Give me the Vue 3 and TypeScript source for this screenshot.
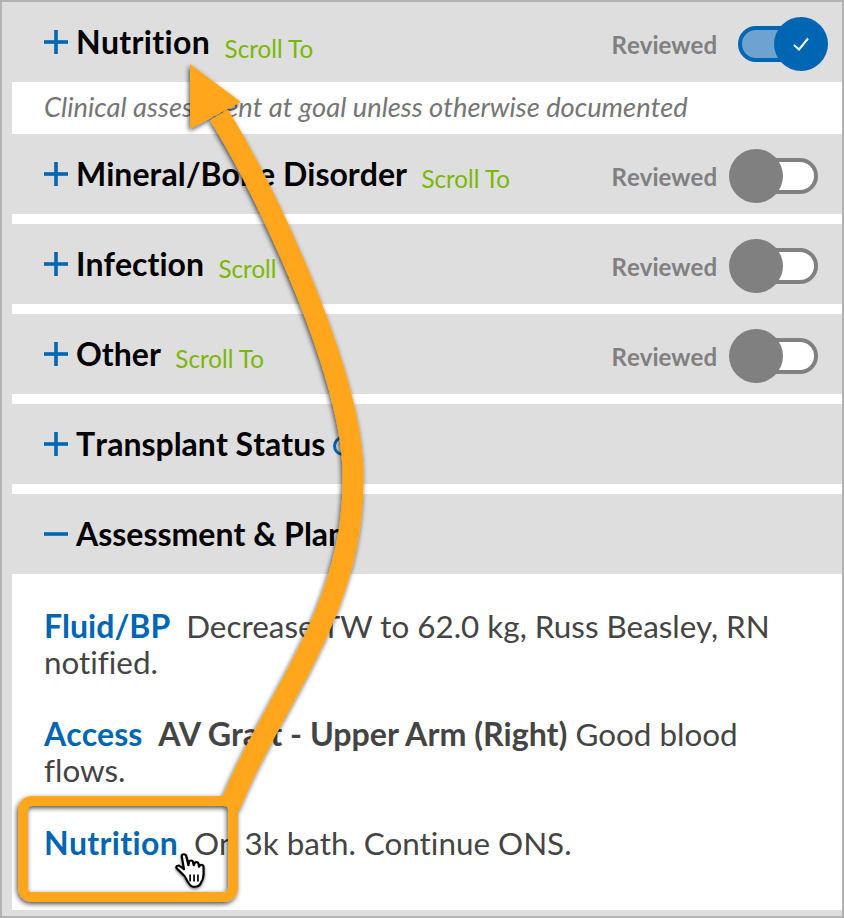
<script setup lang="ts">
interface Row { title: string; scroll?: boolean; reviewed?: 'on' | 'off'; sign: 'plus' | 'minus'; info?: boolean; note?: string }
const rows: Row[] = [
  { title: 'Nutrition', scroll: true, reviewed: 'on', sign: 'plus', note: 'Clinical assessment at goal unless otherwise documented' },
  { title: 'Mineral/Bone Disorder', scroll: true, reviewed: 'off', sign: 'plus' },
  { title: 'Infection', scroll: true, reviewed: 'off', sign: 'plus' },
  { title: 'Other', scroll: true, reviewed: 'off', sign: 'plus' },
  { title: 'Transplant Status', info: true, sign: 'plus' },
  { title: 'Assessment & Plan', sign: 'minus' }
]
</script>

<template>
  <div class="frame">
    <div class="panel">
      <template v-for="(r, i) in rows" :key="r.title">
        <section class="row" :class="{ first: i === 0 }">
          <svg class="sign" width="24" height="24" viewBox="0 0 24 24">
            <rect x="0" y="10.2" width="24" height="3.6" fill="#0066b3" />
            <rect v-if="r.sign === 'plus'" x="10.2" y="0" width="3.6" height="24" fill="#0066b3" />
          </svg>
          <h2 class="title">{{ r.title }}</h2>
          <span v-if="r.scroll" class="scroll">Scroll To</span>
          <span v-if="r.info" class="info"></span>
          <div v-if="r.reviewed" class="review">
            <span class="review-label">Reviewed</span>
            <span class="toggle" :class="r.reviewed">
              <span class="knob">
                <svg v-if="r.reviewed === 'on'" width="18" height="16" viewBox="0 0 18 16">
                  <path d="M2 9 L7 13.5 L16 2.5" fill="none" stroke="#fff" stroke-width="2" />
                </svg>
              </span>
            </span>
          </div>
        </section>
        <p v-if="r.note" class="note">{{ r.note }}</p>
        <div v-else-if="i < rows.length - 1" class="gap"></div>
      </template>
      <div class="body">
        <p class="para"><a class="lnk">Fluid/BP</a>Decrease TW to 62.0 kg, Russ Beasley, RN notified.</p>
        <p class="para"><a class="lnk">Access</a><b>AV Graft - Upper Arm (Right)</b> Good blood flows.</p>
        <p class="para"><a class="lnk wide">Nutrition</a>On 3k bath. Continue ONS.</p>
      </div>
    </div>

    <svg class="overlay" width="844" height="918" viewBox="0 0 844 918">
      <defs>
        <filter id="sh" x="-20%" y="-20%" width="140%" height="140%">
          <feDropShadow dx="-1" dy="2" stdDeviation="2.5" flood-color="#000" flood-opacity="0.7" />
        </filter>
        <filter id="hs" x="-30%" y="-30%" width="160%" height="160%">
          <feDropShadow dx="0" dy="1.5" stdDeviation="1.2" flood-color="#000" flood-opacity="0.5" />
        </filter>
      </defs>
      <g filter="url(#sh)">
        <path d="M219 115 C 266 190, 353 375, 353 475 C 356 610, 272 700, 230 806" fill="none" stroke="#ffa61f" stroke-width="21" />
        <path d="M190 64 L241 102 L190 129 Z" fill="#ffa61f" />
        <rect x="23" y="801" width="210" height="96" rx="9" fill="none" stroke="#ffa61f" stroke-width="10" />
      </g>
      <g transform="translate(175 853) scale(1.12 1.02)" filter="url(#hs)">
        <path d="M8 22 L1.5 15 C0.5 13 3 11.5 4.5 13 L8 16 L6 3 C6 0.5 9.5 0.5 10 3 L12 12 L12.5 8.5 C13 7 15.5 7 16 8.5 L16.8 12 L17.5 10 C18 8.5 20.5 8.5 21 10.5 L21.5 13.5 L22.5 12 C24 11 25.5 12 25.5 14 L25.5 21 C25.5 25 24.5 27 23 29.5 C22 32 20 33.5 16 33 C12 32.5 10.5 25 8 22 Z" fill="#fff" stroke="#000" stroke-width="2" stroke-linejoin="round" />
        <path d="M13.5 21 V28 M17 21 V28 M20.5 21 V28" stroke="#000" stroke-width="1.5" fill="none" />
      </g>
    </svg>
  </div>
</template>

<style>
html, body { margin: 0; }
</style>

<style scoped>
.frame {
  position: relative;
  width: 844px;
  height: 918px;
  box-sizing: border-box;
  border: 2px solid #b3b3b3;
  background: #dedede;
  padding: 0 0 6px 10px;
  font-family: Lato, "Open Sans", sans-serif;
  font-variant-ligatures: none;
  font-kerning: none;
  overflow: hidden;
}
.panel {
  height: 100%;
  display: flex;
  flex-direction: column;
  background: #fff;
}
.row {
  height: 80px;
  flex: none;
  display: flex;
  align-items: center;
  background: #dedede;
  padding-left: 32px;
  padding-right: 24px;
  box-sizing: border-box;
}
.sign { flex: none; margin-right: 8px; }
.title { margin: 0; font-size: 32px; font-weight: 700; color: #000; line-height: 40px; }
.first .title { letter-spacing: 0.33px; }
.scroll { margin-left: 14.5px; font-size: 24.2px; font-kerning: normal; color: #7ab800; line-height: 30px; padding-top: 10px; }
.first .scroll { padding-top: 14px; }
.info { width: 20px; height: 20px; margin-left: 8px; margin-top: 4px; border: 3px solid #0066b3; border-radius: 50%; box-sizing: border-box; flex: none; }
.review { margin-left: auto; display: flex; align-items: center; margin-top: 4px; }
.review-label { font-size: 24px; font-weight: 700; color: #808080; margin-right: 21px; }
.toggle {
  position: relative;
  display: block;
  width: 80px;
  height: 36px;
  box-sizing: border-box;
  border-radius: 18px;
  border: 4px solid #808080;
  background: #fff;
}
.toggle.on { border-color: #0066b3; background: #6fa3cf; width: 62px; margin-right: 18px; }
.knob {
  position: absolute;
  top: -13px;
  left: -13px;
  width: 54px;
  height: 54px;
  border-radius: 50%;
  background: #808080;
  display: flex;
  align-items: center;
  justify-content: center;
}
.toggle.on .knob { left: 32px; background: #0066b3; }
.gap { height: 10px; flex: none; }
.note {
  margin: 0;
  height: 52px;
  flex: none;
  padding-left: 32px;
  font-size: 27.3px;
  font-style: italic;
  line-height: 50px;
  color: #757575;
}
.body { padding: 33.5px 32px 0; }
.para { margin: 0 0 36.5px; font-size: 31.4px; font-kerning: normal; line-height: 36px; color: #444; }
.lnk { color: #0066b3; font-size: 32px; font-kerning: none; font-weight: 700; margin-right: 16px; }
.lnk.wide { letter-spacing: 0.33px; }
.para b { font-size: 32.2px; font-weight: 700; }
.overlay { position: absolute; left: -2px; top: -2px; pointer-events: none; }
</style>
